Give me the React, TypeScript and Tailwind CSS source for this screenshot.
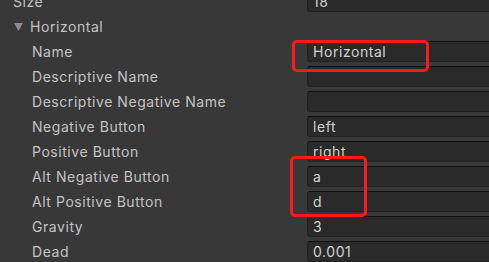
import React from "react";

const rows: { label: string; value?: string; indent?: boolean; foldout?: boolean }[] = [
  { label: "Size", value: "18" },
  { label: "Horizontal", foldout: true },
  { label: "Name", value: "Horizontal", indent: true },
  { label: "Descriptive Name", value: "", indent: true },
  { label: "Descriptive Negative Name", value: "", indent: true },
  { label: "Negative Button", value: "left", indent: true },
  { label: "Positive Button", value: "right", indent: true },
  { label: "Alt Negative Button", value: "a", indent: true },
  { label: "Alt Positive Button", value: "d", indent: true },
  { label: "Gravity", value: "3", indent: true },
  { label: "Dead", value: "0.001", indent: true },
];

export default function App() {
  return (
    <div
      className="relative w-[489px] h-[262px] overflow-hidden bg-[#383838] text-[14px] tracking-[0.55px] text-[#c4c4c4]"
      style={{ fontFamily: "Inter, 'Noto Sans', sans-serif" }}
    >
      <div className="-mt-[11px] flex flex-col">
        {rows.map((r, i) => (
          <div key={i} className="flex h-[25px] items-center">
            <div className="w-[307px] shrink-0 flex items-center">
              {r.foldout ? (
                <div className="flex items-center pl-[14px]">
                  <svg width="9" height="8" viewBox="0 0 9 8" className="mr-[7px]">
                    <path d="M0 0 H9 L4.5 8 Z" fill="#8c8c8c" />
                  </svg>
                  <span>{r.label}</span>
                </div>
              ) : (
                <span className={r.indent ? "pl-[32px]" : "pl-[13px]"}>{r.label}</span>
              )}
            </div>
            {r.value !== undefined && (
              <div className="flex h-[21px] flex-1 -mr-[10px] items-center rounded-[3px] border border-[#212121] border-t-[#0f0f0f] bg-[#2a2a2a] pl-[5px] text-[#d2d2d2]">
                {r.value}
              </div>
            )}
          </div>
        ))}
      </div>
      <div className="absolute left-[292px] top-[40px] w-[137px] h-[32px] rounded-[5px] border-[3px] border-[#ff1a1a]" />
      <div className="absolute left-[290px] top-[156px] w-[77px] h-[61px] rounded-[5px] border-[3px] border-[#ff1a1a]" />
    </div>
  );
}
